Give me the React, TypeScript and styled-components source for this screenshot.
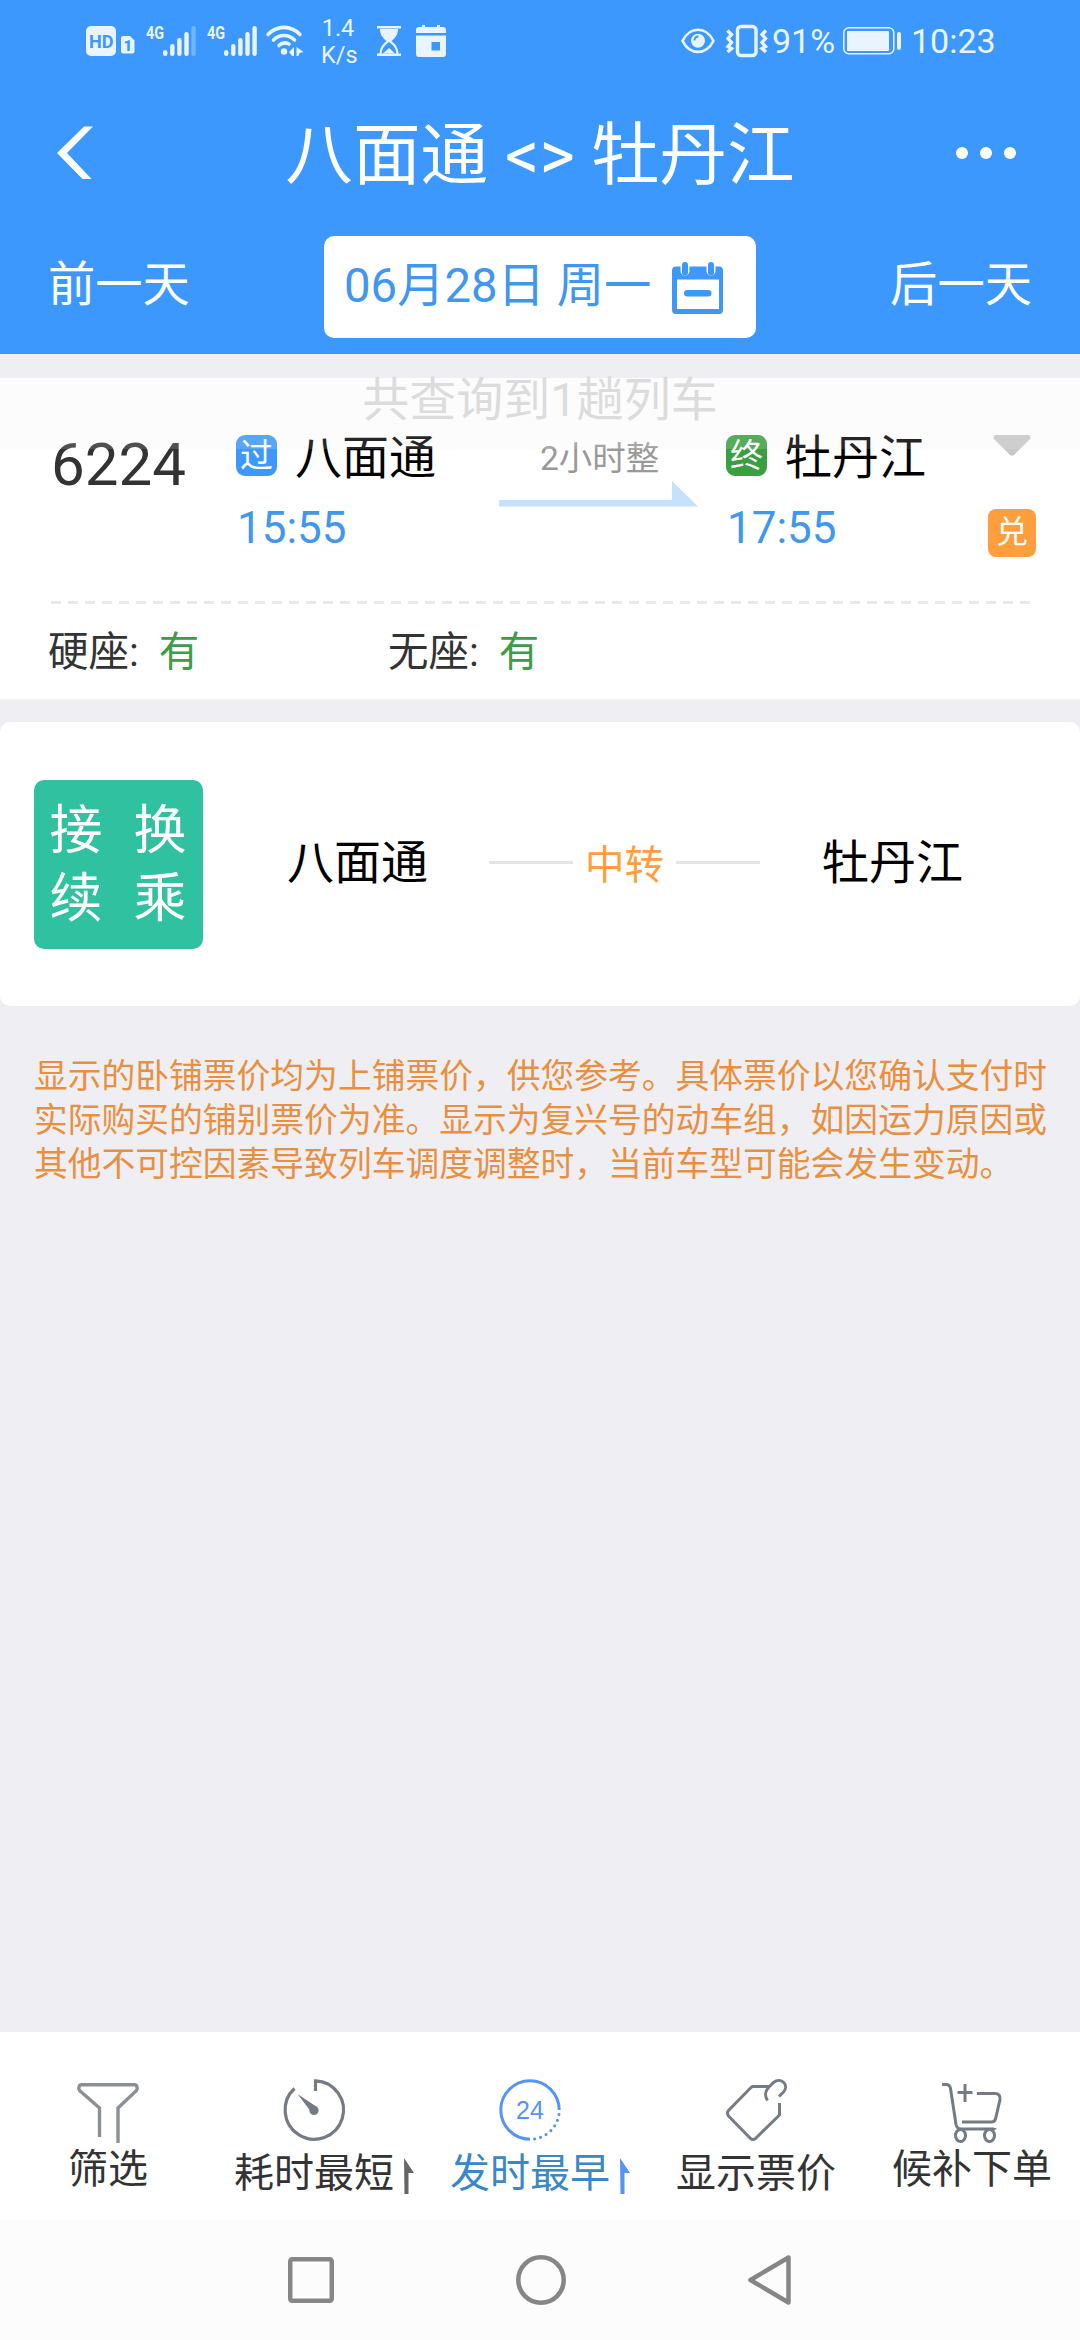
import React from "react";
import styled, { createGlobalStyle } from "styled-components";

const BLUE = "#3c98fc";

const GlobalStyle = createGlobalStyle`
  * { box-sizing: border-box; }
  html, body { margin: 0; padding: 0; background: #efeef3; }
  body { font-family: Roboto, "Noto Sans CJK SC", sans-serif; color: #333; }
  svg { display: block; flex: none; overflow: visible; }
`;

const Screen = styled.main`
  display: flex;
  flex-direction: column;
  width: 1080px;
  height: 2340px;
  background: #efeef3;
  overflow: hidden;
  white-space: nowrap;
`;

/* ---------- header ---------- */
const Header = styled.header`
  height: 354px;
  background: ${BLUE};
  color: #fff;
  flex: none;
`;

const StatusBar = styled.div`
  display: flex;
  justify-content: space-between;
  height: 82px;
  padding: 0 86px 0 86px;
  color: #eaf4ff;
`;

const StatusGroup = styled.div`
  display: flex;
  align-items: center;
  height: 82px;
`;

const NetSpeed = styled.div`
  width: 34px;
  margin: 2px 22px 0 18px;
  text-align: center;
  font-size: 23.5px;
  line-height: 27px;
`;

const StatusText = styled.span<{ $w: number; $ml: number }>`
  width: ${(p) => p.$w}px;
  margin-left: ${(p) => p.$ml}px;
  font-size: 34px;
  line-height: 40px;
`;

const TitleBar = styled.div`
  display: grid;
  grid-template-columns: 140px 1fr 140px;
  align-items: center;
  height: 142px;
`;

const BackIcon = styled.svg`
  margin-left: 57px;
`;

const Title = styled.h1`
  margin: 6px 0 0;
  text-align: center;
  font-size: 67.7px;
  font-weight: 400;
  line-height: 80px;
`;

const Dots = styled.div`
  display: flex;
  justify-content: flex-end;
  gap: 12px;
  padding-right: 64px;
  i { flex: none; width: 12px; height: 12px; border-radius: 50%; background: #fff; }
`;

const DateBar = styled.div`
  display: flex;
  align-items: flex-start;
  justify-content: space-between;
  padding: 12px 48px 0;
`;

const DayButton = styled.button`
  border: 0;
  padding: 0;
  background: none;
  color: #fff;
  font: 400 47.3px/99px Roboto, "Noto Sans CJK SC", sans-serif;
`;

const DateBox = styled.div`
  display: flex;
  align-items: center;
  justify-content: space-between;
  width: 432px;
  height: 102px;
  padding: 1px 33px 0 20px;
  border-radius: 10px;
  background: #fff;
  color: #4197ee;
  font-size: 47.3px;
  line-height: 94px;
`;

const DateText = styled.span`
  margin-top: -4px;
`;

/* ---------- train card ---------- */
const TrainCard = styled.section`
  position: relative;
  height: 321px;
  margin-top: 24px;
  background: #fff;
  flex: none;
`;

const Toast = styled.div`
  position: absolute;
  inset: 0 0 auto;
  height: 71px;
  background: rgba(235, 235, 235, 0.16);
  color: #dcdcdc;
  text-align: center;
  font-size: 47px;
  line-height: 44px;
`;

const TrainRow = styled.div`
  display: grid;
  grid-template-columns: 185px 260px 230px 248px 1fr;
  height: 223px;
  padding: 50px 44px 0 51px;
`;

const TrainNo = styled.div`
  margin-top: 1px;
  font-size: 60px;
  line-height: 72px;
`;

const Station = styled.div`
  display: grid;
  grid-template-columns: 41px 1fr;
  align-content: start;
  column-gap: 18px;
`;

const Tag = styled.span<{ $bg: string }>`
  display: flex;
  align-items: center;
  justify-content: center;
  width: 41px;
  height: 41px;
  margin-top: 7px;
  border-radius: 9px;
  background: ${(p) => p.$bg};
  color: #fff;
  font-size: 33px;
  line-height: 41px;
`;

const StationName = styled.span`
  color: #000;
  font-size: 47px;
  line-height: 59px;
`;

const Time = styled.span`
  grid-column: 1 / -1;
  padding-left: 1px;
  margin-top: 15px;
  color: #4197ee;
  font-size: 44px;
  line-height: 52px;
`;

const Duration = styled.div`
  padding: 10px 0 0 3px;
  color: #999;
  font-size: 33.5px;
  line-height: 41px;
  span { display: block; padding-left: 41px; }
`;

const Direction = styled.svg`
  margin-top: 2px;
`;

const Extras = styled.div`
  display: flex;
  flex-direction: column;
  align-items: center;
  width: 48px;
  margin: 7px 0 0 14px;
`;

const Exchange = styled.span`
  width: 48px;
  height: 48px;
  margin-top: 53px;
  border-radius: 8px;
  background: #ff9e3d;
  color: #fff;
  text-align: center;
  font-size: 32px;
  line-height: 46px;
`;

const Dashes = styled.div`
  height: 3px;
  margin: 0 50px 0 51px;
  background: repeating-linear-gradient(90deg, #e9e9e9 0 10px, transparent 10px 17px);
`;

const Seats = styled.div`
  display: flex;
  padding: 20px 48px 0;
  font-size: 40.5px;
  line-height: 56px;
`;

const Seat = styled.div`
  display: flex;
  gap: 20px;
  width: 340px;
  b { font-weight: 400; color: #3d9c46; }
`;

/* ---------- transfer card ---------- */
const TransferCard = styled.section`
  display: flex;
  align-items: center;
  height: 284px;
  margin-top: 23px;
  padding: 0 34px;
  border-radius: 10px;
  background: #fff;
  flex: none;
`;

const TransferBadge = styled.div`
  display: grid;
  grid-template-columns: 53px 53px;
  grid-auto-rows: 68px;
  column-gap: 31px;
  align-content: center;
  justify-content: center;
  width: 169px;
  height: 169px;
  padding: 1px 1px 0 0;
  border-radius: 10px;
  background: #30c2a0;
  color: #fff;
  font-size: 53px;
  line-height: 68px;
`;

const Place = styled.span<{ $ml: number }>`
  width: 141px;
  margin-left: ${(p) => p.$ml}px;
  padding-bottom: 2px;
  color: #000;
  font-size: 47px;
  line-height: 56px;
`;

const Via = styled.div`
  display: flex;
  align-items: center;
  justify-content: space-between;
  width: 271px;
  margin: 0 0 4px 61px;
  color: #ff9e3d;
  font-size: 39.5px;
  line-height: 50px;
  span { padding-top: 4px; margin-bottom: -4px; }
  &::before, &::after { content: ""; width: 84px; height: 3px; background: #e5e5e5; }
`;

const Notice = styled.p`
  margin: 49px 0 0;
  padding: 0 34px;
  color: #e8903f;
  font-size: 33.77px;
  line-height: 44.2px;
`;

/* ---------- bottom bars ---------- */
const TabBar = styled.nav`
  display: grid;
  grid-template-columns: repeat(5, 216px);
  height: 191px;
  margin-top: auto;
  border-top: 3px solid #efefef;
  background: #fff;
  flex: none;
`;

const Tab = styled.div<{ $active?: boolean; $top: number; $line: number }>`
  display: flex;
  justify-content: center;
  gap: 10px;
  padding-top: ${(p) => p.$top}px;
  color: ${(p) => (p.$active ? "#3a88c4" : "#333")};
  line-height: ${(p) => p.$line}px;
`;

const TabBody = styled.div`
  display: flex;
  flex-direction: column;
  align-items: center;
  font-size: 40px;
`;

const SortArrow = styled.svg`
  margin-top: 79px;
`;

const NavBar = styled.div`
  display: flex;
  align-items: center;
  justify-content: center;
  gap: 182px;
  height: 120px;
  padding-right: 2px;
  background: #fcfcfc;
  flex: none;
`;

const BARS = [6, 12, 18, 24, 30];

function Signal({ dimLast }: { dimLast?: boolean }) {
  return (
    <svg width="52" height="34" viewBox="0 0 52 34" fill="#eaf4ff">
      <text x="0" y="15" fontFamily="Roboto" fontWeight="700" fontSize="18" textLength="18" lengthAdjust="spacingAndGlyphs">4G</text>
      {BARS.map((h, i) => (
        <rect key={h} x={17 + i * 7.1} y={32 - h} width="4.4" height={h} rx="2.2" opacity={dimLast && i === 4 ? 0.3 : 1} />
      ))}
    </svg>
  );
}

const SignalPair = styled.div`
  display: flex;
  gap: 9px;
  margin: 0 7px 0 10px;
`;

const CalendarGlyph = styled.svg`
  margin-left: 15px;
`;

function StatusLeft() {
  return (
    <StatusGroup>
      <svg width="50" height="30" viewBox="0 0 50 30" fill="#eaf4ff">
        <rect width="30" height="30" rx="5" />
        <text x="3" y="21.5" fill={BLUE} fontFamily="Roboto" fontWeight="700" fontSize="19" textLength="24.5" lengthAdjust="spacingAndGlyphs">HD</text>
        <path d="M37 10h7l4.500 4.500V25.500a2 2 0 0 1-2 2H37a2 2 0 0 1-2-2V12a2 2 0 0 1 2-2z" />
        <text x="37.500" y="24.500" fill={BLUE} fontFamily="Roboto" fontWeight="900" fontSize="15">1</text>
      </svg>
      <SignalPair>
        <Signal dimLast />
        <Signal />
      </SignalPair>
      <svg width="37" height="32" viewBox="0 0 37 32" fill="none" stroke="#eaf4ff" strokeWidth="3.600" strokeLinecap="round">
        <path d="M2 9.500C11 0 25 0 34 9.500M7.500 15c6-6 15-6 21 0M13 20.500c3-3 7-3 10-1.500" />
        <circle cx="18" cy="26.500" r="3.200" fill="#eaf4ff" stroke="none" />
        <path d="M23 27l5-5v9h-2zM30.500 22l7 5-4 1-1 3h-2z" fill="#eaf4ff" stroke="none" />
      </svg>
      <NetSpeed>1.4<br />K/s</NetSpeed>
      <svg width="24" height="30" viewBox="0 0 24 30" fill="#eaf4ff">
        <path d="M0 0h24v2.500H0zM0 27.500h24V30H0zM3 3h18c0 6-3 9-7 12.500h-4C6 12 3 9 3 3z" />
        <path d="M3.500 28c0-7 4-10 8.500-13.500C16.500 18 20.500 21 20.500 28" fill="none" stroke="#eaf4ff" strokeWidth="2.200" />
        <path d="M6 27.500l6-5.500 6 5.500z" />
      </svg>
      <CalendarGlyph width="30" height="32" viewBox="0 0 30 32" fill="#eaf4ff">
        <path d="M0 8V5a3 3 0 0 1 3-3h3V0h3v2h12V0h3v2h3a3 3 0 0 1 3 3v3z" />
        <path fillRule="evenodd" d="M0 10.500h30V29a3 3 0 0 1-3 3H3a3 3 0 0 1-3-3zM15.500 17v8.500H24V17z" />
      </CalendarGlyph>
    </StatusGroup>
  );
}

const VibrateGlyph = styled.svg`
  margin-left: 11px;
`;

const BatteryGlyph = styled.svg`
  margin-left: 9px;
`;

function StatusRight() {
  return (
    <StatusGroup>
      <svg width="34" height="26" viewBox="0 0 34 26" fill="none" stroke="#eaf4ff" strokeWidth="2.600">
        <path d="M1.500 12.800C9-2 25-2 32.500 12.800 25 27.500 9 27.500 1.500 12.800z" strokeLinejoin="round" />
        <circle cx="17" cy="12.800" r="7" fill="#eaf4ff" stroke="none" />
        <path d="M13.500 12.500c0-2.500 1.500-4 4-4" stroke={BLUE} strokeWidth="1.800" />
      </svg>
      <VibrateGlyph width="42" height="32" viewBox="0 0 42 32" fill="none" stroke="#eaf4ff" strokeWidth="3.400">
        <rect x="11.500" y="1.500" width="18.500" height="29" rx="3.500" />
        <path d="M1.500 5.500l4 4-3.500 4 3.500 4-3.500 4 3.500 2-4 3.500M40 5.500l-4 4 3.500 4-3.500 4 3.500 4-3.500 2 4 3.500" />
      </VibrateGlyph>
      <StatusText $w={62} $ml={4}>91%</StatusText>
      <BatteryGlyph width="59" height="28" viewBox="0 0 59 28">
        <rect x="0.800" y="0.800" width="50" height="26" rx="5" fill="none" stroke="#eaf4ff" strokeWidth="1.500" />
        <rect x="4" y="4" width="42" height="20" rx="1" fill="#eaf4ff" />
        <rect x="54" y="5" width="4" height="18" rx="2" fill="#eaf4ff" />
      </BatteryGlyph>
      <StatusText $w={83} $ml={9}>10:23</StatusText>
    </StatusGroup>
  );
}

const GREY = "#747b83";

const FunnelIcon = () => (
  <svg width="62" height="60" viewBox="0 0 62 60" fill="none" stroke="#8b9096" strokeWidth="3.400">
    <path d="M22.500 54V25L2.500 7.500C1 5 2 1.800 4.500 1.800h53c2.500 0 3.500 3.200 2 5.700L41 25v35" />
  </svg>
);

const TimerIcon = () => (
  <svg width="62" height="62" viewBox="0 0 62 62" fill="none" stroke={GREY} strokeWidth="3.200">
    <path d="M32.500 12V1.800A29.200 29.200 0 1 1 11.500 9.500" />
    <circle cx="31" cy="31.500" r="4.600" fill={GREY} stroke="none" />
    <path d="M14.500 15L34 28l-5.500 5.500z" fill={GREY} stroke="none" />
  </svg>
);

const Icon24 = () => (
  <svg width="62" height="62" viewBox="0 0 62 62" fill="none" stroke="#5793f2" strokeWidth="3">
    <path d="M31 60.200A29.200 29.200 0 1 1 60.200 31" />
    <path d="M60 35.500A29.200 29.200 0 0 1 35 60" strokeDasharray="0.100 6" strokeLinecap="round" />
    <text x="31" y="40" textAnchor="middle" fill="#5793f2" stroke="none" fontFamily="Liberation Sans" fontSize="25">24</text>
  </svg>
);

const PriceIcon = () => (
  <svg width="60" height="62" viewBox="0 0 60 62" fill="none" stroke={GREY} strokeWidth="3">
    <path d="M43.500 7.500H27Q26 7.500 25 8.500L2.500 31.500Q.500 34 2.500 37L24.500 59.500Q27 61.500 29.500 59.500L53.500 36V24" strokeLinejoin="round" />
    <path d="M41.500 21.500C37.500 15 40 11 43.500 7.500l4-4c8-6 16 3 10 9.500L53 17.500" />
  </svg>
);

const CartIcon = () => (
  <svg width="60" height="60" viewBox="0 0 60 60" fill="none" stroke={GREY} strokeWidth="3">
    <path d="M0 1.500h4c3 0 4 1 4.500 4l5.500 36q1 4.500 5 4.500h29q5 0 5-1" />
    <path d="M35 10.500h18q5.500 0 5 6L53.500 36q-1 3-4 3H20" />
    <path d="M15.500 9.500h15M23 1v18" />
    <ellipse cx="18.500" cy="52.500" rx="5" ry="6" />
    <ellipse cx="47.500" cy="52.500" rx="5" ry="6" />
  </svg>
);

const Arrow = ({ color }: { color: string }) => (
  <SortArrow width="10" height="36" viewBox="0 0 10 36" fill={color}>
    <path d="M0 0l10 15H4.500v21H0.500z" />
  </SortArrow>
);

export default function App() {
  return (
    <>
      <GlobalStyle />
      <Screen>
        <Header>
          <StatusBar>
            <StatusLeft />
            <StatusRight />
          </StatusBar>
          <TitleBar>
            <BackIcon width="36" height="54" viewBox="0 0 36 54" fill="#fff">
              <path d="M27 0.500h9L10 27l24.500 26H25.500L0 27z" />
            </BackIcon>
            <Title>八面通 &lt;&gt; 牡丹江</Title>
            <Dots><i /><i /><i /></Dots>
          </TitleBar>
          <DateBar>
            <DayButton>前一天</DayButton>
            <DateBox>
              <DateText>06月28日 周一</DateText>
              <svg width="51" height="52" viewBox="0 0 51 52" fill={BLUE}>
                <path fillRule="evenodd" d="M4 4.500h4.500V9a4.500 4.500 0 0 0 9 0V4.500h17V9a4.500 4.500 0 0 0 9 0V4.500H47a4 4 0 0 1 4 4V48a4 4 0 0 1-4 4H4a4 4 0 0 1-4-4V8.500a4 4 0 0 1 4-4zM5 17.500V47h42V17.500z" />
                <rect x="10" y="0" width="6" height="13.500" rx="3" />
                <rect x="36" y="0" width="6" height="13.500" rx="3" />
                <rect x="12" y="28" width="27.500" height="6.500" rx="3.200" />
              </svg>
            </DateBox>
            <DayButton>后一天</DayButton>
          </DateBar>
        </Header>

        <TrainCard>
          <TrainRow>
            <TrainNo>6224</TrainNo>
            <Station>
              <Tag $bg={BLUE}>过</Tag>
              <StationName>八面通</StationName>
              <Time>15:55</Time>
            </Station>
            <Duration>
              <span>2小时整</span>
              <Direction width="199" height="26" viewBox="0 0 199 26" fill="#c6e0fd">
                <path d="M0 19h173V0l26 25.500H0z" />
              </Direction>
            </Duration>
            <Station>
              <Tag $bg="#3a9f41">终</Tag>
              <StationName>牡丹江</StationName>
              <Time>17:55</Time>
            </Station>
            <Extras>
              <svg width="38" height="21" viewBox="0 0 38 21" fill="#c9c9c9">
                <path d="M2.500 0h33q3 1 1.500 4L21 20q-2 1.500-4 0L1 4Q-.500 1 2.500 0z" />
              </svg>
              <Exchange>兑</Exchange>
            </Extras>
          </TrainRow>
          <Dashes />
          <Seats>
            <Seat>硬座:<b>有</b></Seat>
            <Seat>无座:<b>有</b></Seat>
          </Seats>
          <Toast>共查询到1趟列车</Toast>
        </TrainCard>

        <TransferCard>
          <TransferBadge>
            <span>接</span><span>换</span><span>续</span><span>乘</span>
          </TransferBadge>
          <Place $ml={84}>八面通</Place>
          <Via><span>中转</span></Via>
          <Place $ml={62}>牡丹江</Place>
        </TransferCard>

        <Notice>
          显示的卧铺票价均为上铺票价，供您参考。具体票价以您确认支付时<br />
          实际购买的铺别票价为准。显示为复兴号的动车组，如因运力原因或<br />
          其他不可控因素导致列车调度调整时，当前车型可能会发生变动。
        </Notice>

        <TabBar>
          <Tab $top={51} $line={53}><TabBody><FunnelIcon />筛选</TabBody></Tab>
          <Tab $top={47} $line={66}><TabBody><TimerIcon />耗时最短</TabBody><Arrow color="#666" /></Tab>
          <Tab $top={47} $line={66} $active><TabBody><Icon24 />发时最早</TabBody><Arrow color="#5793f2" /></Tab>
          <Tab $top={47} $line={66}><TabBody><PriceIcon />显示票价</TabBody></Tab>
          <Tab $top={51} $line={53}><TabBody><CartIcon />候补下单</TabBody></Tab>
        </TabBar>

        <NavBar>
          <svg width="46" height="46" viewBox="0 0 46 46" fill="none" stroke="#868686" strokeWidth="4.500">
            <rect x="2.250" y="2.250" width="41.500" height="41.500" rx="2" />
          </svg>
          <svg width="50" height="50" viewBox="0 0 50 50" fill="none" stroke="#868686" strokeWidth="4.500">
            <circle cx="25" cy="25" r="22.700" />
          </svg>
          <svg width="43" height="50" viewBox="0 0 43 50" fill="none" stroke="#868686" strokeWidth="4.500" strokeLinejoin="round">
            <path d="M40.500 2.500v45L2.500 25z" />
          </svg>
        </NavBar>
      </Screen>
    </>
  );
}
